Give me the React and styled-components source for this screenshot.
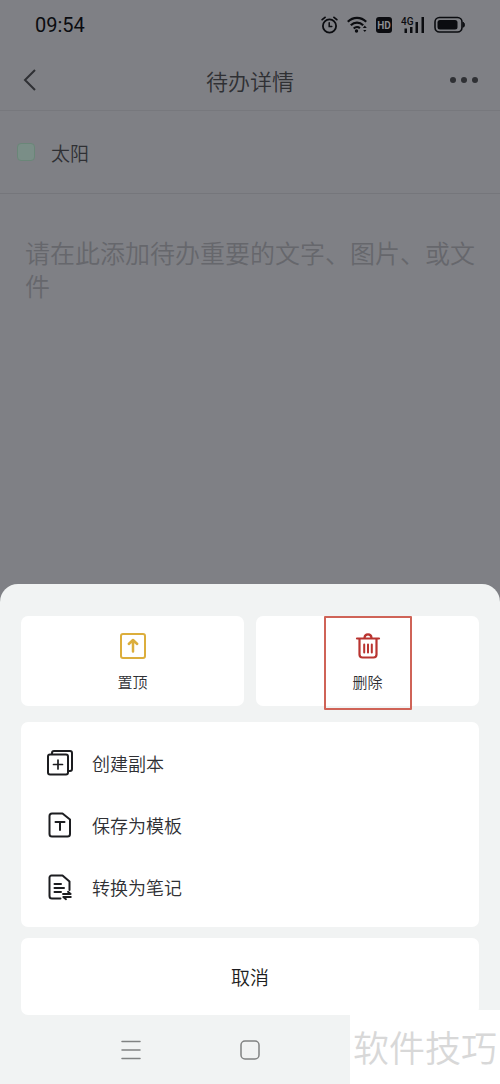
import React from "react";
import styled, { createGlobalStyle } from "styled-components";

const GlobalStyle = createGlobalStyle`
  *, *::before, *::after { box-sizing: border-box; }
  body {
    margin: 0;
    background: #7f8085;
    font-family: "Noto Sans CJK SC", sans-serif;
    font-weight: 350;
  }
  button, input, textarea {
    margin: 0;
    padding: 0;
    border: 0;
    background: none;
    font: inherit;
    color: inherit;
  }
  svg { display: block; flex: none; }
`;

const Page = styled.div`
  position: relative;
  display: flex;
  flex-direction: column;
  min-height: 100vh;
  background: #7f8085;
  color: #2f3034;
`;

const StatusBar = styled.div`
  display: flex;
  align-items: center;
  justify-content: space-between;
  height: 50px;
  padding: 0 35px;
  color: #0b0c10;
`;

const Clock = styled.time`
  font: 400 20px/24px Roboto, sans-serif;
`;

const StatusIcons = styled.div`
  display: flex;
  align-items: center;
  gap: 9px;
`;

const Header = styled.header`
  display: grid;
  grid-template-columns: 60px 1fr 60px;
  align-items: center;
  height: 61px;
  padding: 0 6px;
  border-bottom: 1px solid #77787d;
`;

const IconButton = styled.button`
  display: flex;
  align-items: center;
  justify-content: ${(p) => p.$align || "center"};
  height: 44px;
  padding: 0 15px;
`;

const Title = styled.h1`
  margin: 0;
  font-size: 22px;
  line-height: 32px;
  font-weight: inherit;
  text-align: center;
`;

const TodoRow = styled.label`
  display: flex;
  align-items: center;
  gap: 16px;
  height: 83px;
  padding: 0 17px;
  border-bottom: 1px solid #75767b;
  font-size: 19px;
`;

const Check = styled.input`
  appearance: none;
  flex: none;
  width: 18px;
  height: 18px;
  border: 1px solid #6a8678;
  border-radius: 4px;
  background: #7a8e87;
`;

const Notes = styled.textarea`
  display: block;
  width: 100%;
  height: 150px;
  padding: 42px 25px 0;
  overflow: hidden;
  resize: none;
  outline: none;
  font-size: 25px;
  line-height: 33px;
  &::placeholder {
    color: #66676c;
    opacity: 1;
  }
`;

const Sheet = styled.section`
  display: flex;
  flex-direction: column;
  margin-top: auto;
  padding: 32px 21px 0;
  border-radius: 18px 18px 0 0;
  background: #f1f3f3;
`;

const Actions = styled.div`
  display: grid;
  grid-template-columns: 1fr 1fr;
  gap: 12px;
`;

const ActionCard = styled.button`
  position: relative;
  display: flex;
  flex-direction: column;
  align-items: center;
  gap: 10px;
  height: 90px;
  padding-top: 16px;
  border-radius: 7px;
  background: #fff;
  font-size: 15px;
  line-height: 24px;
`;

const Highlight = styled.span`
  position: absolute;
  top: 0;
  left: 50%;
  width: 88px;
  height: 94px;
  margin-left: -44px;
  border: 2px solid #cf6357;
  border-radius: 1px;
`;

const List = styled.div`
  display: flex;
  flex-direction: column;
  margin-top: 16px;
  padding: 10px 0 9px;
  border-radius: 7px;
  background: #fff;
`;

const ListItem = styled.button`
  display: flex;
  align-items: center;
  gap: 18px;
  height: 62px;
  padding: 0 25px;
  font-size: 18px;
  text-align: left;

  svg { color: #1c1d20; }
`;

const Cancel = styled.button`
  height: 77px;
  margin-top: 11px;
  border-radius: 7px;
  background: #fff;
  color: #1c1d20;
  font-size: 19px;
`;

const NavBar = styled.nav`
  display: grid;
  grid-template-columns: repeat(3, 26%);
  justify-content: center;
  height: 69px;
`;

const NavButton = styled.button`
  display: flex;
  align-items: center;
  justify-content: center;
`;

const Watermark = styled.div`
  position: absolute;
  right: 0;
  bottom: 0;
  width: 150px;
  height: 74px;
  background: #fff;
  color: #d8d8d8;
  font-size: 36px;
  line-height: 72px;
  text-align: center;
  white-space: nowrap;
`;

const AlarmIcon = () => (
  <svg width="17" height="18" viewBox="0 0 17 18" fill="none" stroke="currentColor" strokeLinecap="round">
    <circle cx="8.5" cy="10" r="6.6" strokeWidth="1.8" />
    <path d="M8.2 6.8v3.6h2.6" strokeWidth="1.5" />
    <path d="M1.2 3.6 4 1.4M15.8 3.6 13 1.4" strokeWidth="1.8" />
  </svg>
);

const WifiIcon = () => (
  <svg width="20" height="18" viewBox="0 0 20 18" fill="none" stroke="currentColor">
    <path d="M.8 5.8C6 .6 14 .6 19.2 5.8" strokeWidth="2.2" />
    <path d="M3.800 9.300c3.600-3.500 8.800-3.500 12.400 0" strokeWidth="2.200" />
    <path d="M6.700 12.500c2-1.900 4.600-1.900 6.200-.3" strokeWidth="2.100" />
    <circle cx="9.500" cy="15" r="1.700" fill="currentColor" stroke="none" />
    <path d="m15.800 12 2-2.500 2 2.500zM16.200 14l1.600 2 1.600-2z" fill="currentColor" stroke="none" />
  </svg>
);

const HdIcon = () => (
  <svg width="16" height="16" viewBox="0 0 16 16">
    <rect width="16" height="16" rx="3" fill="currentColor" />
    <text x="8" y="12" textAnchor="middle" fontFamily="Roboto, sans-serif" fontWeight="700" fontSize="10" fill="#8d8e93">
      HD
    </text>
  </svg>
);

const SignalIcon = () => (
  <svg width="24" height="18" viewBox="0 0 24 18" fill="currentColor">
    <text x="0" y="9" fontFamily="Roboto, sans-serif" fontWeight="500" fontSize="10">
      4G
    </text>
    <path d="M3.500 12.500h2.500v4.500h-2.500zM9 11h2.500v6H9zM14.500 6H17v11h-2.500zM20.500 1H23v16h-2.500z" />
  </svg>
);

const BatteryIcon = () => (
  <svg width="31" height="18" viewBox="0 0 31 18" fill="none">
    <rect x="1" y="1.500" width="27" height="14.500" rx="4.500" stroke="currentColor" strokeWidth="1.600" />
    <rect x="3.500" y="4" width="20" height="9.600" rx="2.500" fill="currentColor" />
    <path d="M29.200 6.300c1.600.6 1.600 4.400 0 5z" fill="currentColor" stroke="currentColor" />
  </svg>
);

const BackIcon = () => (
  <svg width="20" height="24" viewBox="0 0 20 24" fill="none" stroke="currentColor" strokeWidth="2">
    <path d="M14 2 4 12l10 10" />
  </svg>
);

const MoreIcon = () => (
  <svg width="30" height="8" viewBox="0 0 30 8" fill="currentColor">
    <circle cx="4" cy="4" r="3" />
    <circle cx="15" cy="4" r="3" />
    <circle cx="26" cy="4" r="3" />
  </svg>
);

const PinTopIcon = () => (
  <svg width="28" height="28" viewBox="0 0 28 28" fill="none" stroke="#dcae3c" strokeWidth="2" strokeLinecap="round" strokeLinejoin="round">
    <rect x="2" y="2" width="24" height="24" rx="2" />
    <path d="M14 19.500V8.500M9.800 12 14 8l4.200 4" strokeWidth="2.500" />
  </svg>
);

const TrashIcon = () => (
  <svg width="28" height="28" viewBox="0 0 28 28" fill="none" stroke="#b93430" strokeWidth="2.200" strokeLinecap="round" strokeLinejoin="round">
    <path d="M3 6.500h22M5.500 7v15.500a3 3 0 0 0 3 3h11a3 3 0 0 0 3-3V7" />
    <path d="M10.500 6c.2-4.800 6.800-4.800 7 0" />
    <path d="M10.200 12.500v8M14 12.500v8M17.800 12.500v8" strokeWidth="2" />
  </svg>
);

const CopyIcon = () => (
  <svg width="28" height="28" viewBox="0 0 28 28" fill="none" stroke="currentColor" strokeWidth="2" strokeLinejoin="round" strokeLinecap="round">
    <rect x="2" y="5.500" width="20" height="20" rx="2" />
    <path d="M6 5V4a2 2 0 0 1 2-2h16a2 2 0 0 1 2 2v16a2 2 0 0 1-2 2h-1.500" />
    <path d="M12 11v9M7.500 15.500h9" strokeWidth="1.700" />
  </svg>
);

const TemplateIcon = () => (
  <svg width="28" height="28" viewBox="0 0 28 28" fill="none" stroke="currentColor" strokeWidth="2" strokeLinejoin="round" strokeLinecap="round">
    <path d="M6 2.500h10.500L24 8.500V23a2.500 2.500 0 0 1-2.500 2.500H6A2.500 2.500 0 0 1 3.500 23V5A2.500 2.500 0 0 1 6 2.500z" />
    <path d="M9.500 11h9M14 11v8" />
  </svg>
);

const NoteIcon = () => (
  <svg width="28" height="28" viewBox="0 0 28 28" fill="none" stroke="currentColor" strokeWidth="2" strokeLinejoin="round" strokeLinecap="round">
    <path d="M14.500 25.500H6A2.500 2.500 0 0 1 3.500 23V4.500a2 2 0 0 1 2-2h11L23.500 8.500V17" />
    <path d="M8.500 11h6.500M8.500 15h9.500M8.500 19h6.500" />
    <path d="M17 21h7.500M22 18.800l2.700 2.200M17.300 24h7.500M17.300 24l2.700 2.200" strokeWidth="1.900" />
  </svg>
);

const MenuIcon = () => (
  <svg width="20" height="20" viewBox="0 0 20 20" stroke="#808282" strokeWidth="1.500" strokeLinecap="round">
    <path d="M1 1.500h18M1 10h18M1 18.500h18" />
  </svg>
);

const HomeIcon = () => (
  <svg width="20" height="20" viewBox="0 0 20 20" fill="none" stroke="#808282" strokeWidth="1.500">
    <rect x="1" y="1" width="18" height="18" rx="4" />
  </svg>
);

const options = [
  { label: "创建副本", Icon: CopyIcon },
  { label: "保存为模板", Icon: TemplateIcon },
  { label: "转换为笔记", Icon: NoteIcon },
];

export default function App() {
  return (
    <>
      <GlobalStyle />
      <Page>
        <StatusBar>
          <Clock>09:54</Clock>
          <StatusIcons>
            <AlarmIcon />
            <WifiIcon />
            <HdIcon />
            <SignalIcon />
            <BatteryIcon />
          </StatusIcons>
        </StatusBar>
        <Header>
          <IconButton type="button" aria-label="返回" $align="flex-start">
            <BackIcon />
          </IconButton>
          <Title>待办详情</Title>
          <IconButton type="button" aria-label="更多" $align="flex-end">
            <MoreIcon />
          </IconButton>
        </Header>
        <TodoRow>
          <Check type="checkbox" />
          太阳
        </TodoRow>
        <Notes aria-label="待办内容" placeholder="请在此添加待办重要的文字、图片、或文件" />
        <Sheet>
          <Actions>
            <ActionCard type="button">
              <PinTopIcon />
              置顶
            </ActionCard>
            <ActionCard type="button">
              <TrashIcon />
              删除
              <Highlight />
            </ActionCard>
          </Actions>
          <List>
            {options.map(({ label, Icon }) => (
              <ListItem type="button" key={label}>
                <Icon />
                {label}
              </ListItem>
            ))}
          </List>
          <Cancel type="button">取消</Cancel>
          <NavBar>
            <NavButton type="button" aria-label="最近任务">
              <MenuIcon />
            </NavButton>
            <NavButton type="button" aria-label="主屏幕">
              <HomeIcon />
            </NavButton>
          </NavBar>
        </Sheet>
        <Watermark>软件技巧</Watermark>
      </Page>
    </>
  );
}
